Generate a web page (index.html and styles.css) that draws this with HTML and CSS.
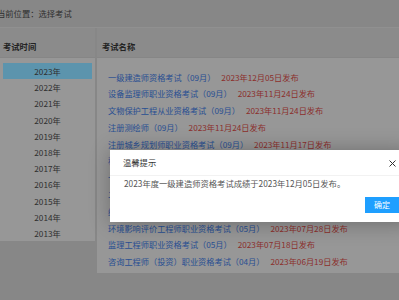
FILE: index.html
```html
<!DOCTYPE html>
<html lang="zh-CN">
<head>
  <meta charset="UTF-8">
  <meta name="viewport" content="width=device-width, initial-scale=1.0">
  <title>选择考试</title>
  <link rel="stylesheet" href="styles.css">
</head>
<body>
  <div class="crumb">当前位置：选择考试</div>

  <div class="board">
    <div class="col-time">
      <div class="col-head">考试时间</div>
      <ul class="years">
        <li class="active">2023年</li>
        <li>2022年</li>
        <li>2021年</li>
        <li>2020年</li>
        <li>2019年</li>
        <li>2018年</li>
        <li>2017年</li>
        <li>2016年</li>
        <li>2015年</li>
        <li>2014年</li>
        <li>2013年</li>
      </ul>
    </div>
    <div class="col-name">
      <div class="col-head">考试名称</div>
      <ul class="exams">
        <li><a href="#">一级建造师资格考试（09月）</a><span class="date">2023年12月05日发布</span></li>
        <li><a href="#">设备监理师职业资格考试（09月）</a><span class="date">2023年11月24日发布</span></li>
        <li><a href="#">文物保护工程从业资格考试（09月）</a><span class="date">2023年11月24日发布</span></li>
        <li><a href="#">注册测绘师（09月）</a><span class="date">2023年11月24日发布</span></li>
        <li><a href="#">注册城乡规划师职业资格考试（09月）</a><span class="date">2023年11月17日发布</span></li>
        <li><a href="#">税务师职业资格考试（09月）</a><span class="date">2023年09月22日发布</span></li>
        <li><a href="#">一级造价工程师职业资格考试（09月）</a><span class="date">2023年09月15日发布</span></li>
        <li><a href="#">二级建造师资格考试（06月）</a><span class="date">2023年08月25日发布</span></li>
        <li><a href="#">经济专业技术资格考试（06月）</a><span class="date">2023年08月10日发布</span></li>
        <li><a href="#">环境影响评价工程师职业资格考试（05月）</a><span class="date">2023年07月28日发布</span></li>
        <li><a href="#">监理工程师职业资格考试（05月）</a><span class="date">2023年07月18日发布</span></li>
        <li><a href="#">咨询工程师（投资）职业资格考试（04月）</a><span class="date">2023年06月19日发布</span></li>
      </ul>
    </div>
  </div>

  <div class="mask"></div>

  <div class="layer">
    <div class="layer-title">
      温馨提示
      <svg class="layer-close" width="7" height="7" viewBox="0 0 7 7">
        <path d="M0.5 0.5 L6.5 6.5 M6.5 0.5 L0.5 6.5" stroke="#333" stroke-width="1" fill="none"/>
      </svg>
    </div>
    <div class="layer-content">2023年度一级建造师资格考试成绩于2023年12月05日发布。</div>
    <div class="layer-btns">
      <a href="#" class="btn">确定</a>
    </div>
  </div>
</body>
</html>
```

FILE: styles.css
```css
body {
  margin: 0;
  overflow: hidden;
  background-color: #c2c2c2;
  font-family: "Noto Sans CJK SC", sans-serif;
  font-size: 8.2px;
  color: #444;
  text-spacing-trim: space-all;
}
ul {
  list-style: none;
  margin: 0;
  padding: 0;
}
a {
  text-decoration: none;
}
.crumb {
  height: 27px;
  line-height: 27px;
  text-indent: -3px;
  font-size: 8.3px;
  border-bottom: 1px solid #cfcfcf;
  background-color: #c2c2c2;
}
.board {
  display: flex;
  gap: 2px;
  align-items: flex-start;
}
.col-time {
  width: 95px;
}
.col-name {
  flex: 1;
}
.col-head {
  height: 21px;
  line-height: 21px;
  padding: 8px 3px 0;
  font-size: 8.3px;
  font-weight: bold;
  color: #333;
  background-color: #c8c8c8;
  border-bottom: 1px solid #c0c0c0;
}
.col-name .col-head {
  padding-left: 5px;
}
.years {
  padding: 5px 3px 0;
  background-color: #d8d8d8;
  height: 178px;
}
.years li {
  height: 16.2px;
  line-height: 16.2px;
  text-align: center;
}
.years li.active {
  background-color: #84d4f8;
}
.exams {
  padding: 10.5px 0 3px 11px;
  background-color: #d8d8d8;
}
.exams li {
  height: 16.8px;
  line-height: 16.8px;
  white-space: nowrap;
}
.exams a {
  color: #3a72d2;
}
.date {
  margin-left: 6px;
  color: #c8443f;
}
.mask {
  position: absolute;
  top: 0;
  left: 0;
  right: 0;
  bottom: 0;
  background-color: rgba(0, 0, 0, 0.3);
}
.layer {
  position: absolute;
  left: 110px;
  top: 150px;
  width: 300px;
  background-color: #fff;
  box-shadow: 1px 1px 20px rgba(0, 0, 0, 0.3);
  color: #333;
}
.layer-title {
  position: relative;
  height: 25px;
  line-height: 25px;
  padding-left: 13px;
  font-size: 8.3px;
  border-bottom: 1px solid #f2f2f2;
}
.layer-close {
  position: absolute;
  right: 14px;
  top: 10px;
}
.layer-content {
  padding: 0 14px;
  line-height: 14px;
  font-size: 8.3px;
  color: #555;
}
.layer-btns {
  display: flex;
  justify-content: flex-end;
  padding: 7px 11px 9px;
}
.btn {
  height: 16px;
  line-height: 16px;
  padding: 0 9px;
  background-color: #1e9fff;
  color: #fff;
  font-size: 8px;
}
```
